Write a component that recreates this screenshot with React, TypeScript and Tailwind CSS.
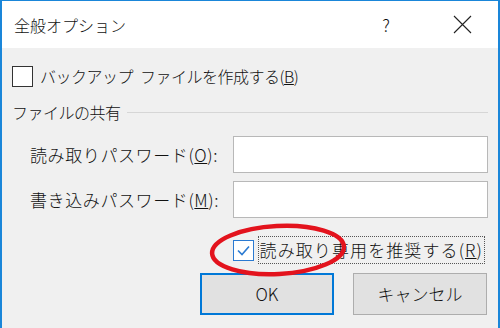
import React from 'react'

const font = { fontFamily: '"Noto Sans CJK JP", "Noto Sans", sans-serif' }

function CheckBox({ checked }: { checked?: boolean }) {
  return (
    <div
      className={`w-[21px] h-[21px] shrink-0 bg-white border-[1.5px] flex items-center justify-center ${
        checked ? 'border-[#2a7ad2]' : 'border-[#333333]'
      }`}
    >
      {checked && (
        <svg width="15" height="15" viewBox="0 0 15 15">
          <path d="M2 7.5 L6 11.5 L13 3.5" fill="none" stroke="#2a7ad2" strokeWidth="1.6" />
        </svg>
      )}
    </div>
  )
}

export default function App() {
  return (
    <div
      className="relative w-[500px] h-[328px] bg-[#f0f0f0] border-l-2 border-r-2 border-t border-[#1a86d9] overflow-hidden text-[#111] font-light"
      style={font}
    >
      {/* Title bar */}
      <div className="h-[47px] bg-white flex items-center pl-[12px]">
        <span className="text-[16px]">全般オプション</span>
        <span className="ml-auto mr-[30px] text-[17px] w-[20px] text-center">?</span>
        <div className="w-[72px] flex justify-center">
          <svg width="19" height="19" viewBox="0 0 19 19">
            <path d="M1 1 L18 18 M18 1 L1 18" stroke="#222" strokeWidth="1.1" />
          </svg>
        </div>
      </div>

      {/* Body */}
      <div className="pl-[10px] pr-[10px]">
        <div className="flex items-center gap-[7px] mt-[17px] h-[22px]">
          <CheckBox />
          <span className="text-[16px] tracking-[-0.5px]">
            <span className="mr-[7px]">バックアップ</span>ファイルを作成する(<span className="underline">B</span>)
          </span>
        </div>

        <div className="flex items-center mt-[14px] h-[22px]">
          <span className="text-[16px] tracking-[-0.5px]">ファイルの共有</span>
          <div className="flex-1 ml-[6px] h-px bg-[#d6d6d6]" />
        </div>

        <div className="pl-[18px] mt-[13px] flex flex-col gap-[8px]">
          <div className="flex items-center">
            <span className="text-[17px] tracking-[0.6px] flex-1">
              読み取りパスワード(<span className="underline">O</span>):
            </span>
            <div className="w-[255px] h-[37px] bg-white border border-[#b8b8b8]" />
          </div>
          <div className="flex items-center">
            <span className="text-[17px] tracking-[0.6px] flex-1">
              書き込みパスワード(<span className="underline">M</span>):
            </span>
            <div className="w-[255px] h-[37px] bg-white border border-[#b8b8b8]" />
          </div>
        </div>

        <div className="flex items-center justify-end mt-[18px] h-[28px] pr-[3px]">
          <CheckBox checked />
          <span className="ml-[4px] text-[17px] tracking-[1.1px] border border-dotted border-[#555] px-[1px] leading-[26px]">
            読み取り専用を推奨する(<span className="underline">R</span>)
          </span>
        </div>

        <div className="flex justify-end gap-[19px] mt-[9px] pr-[1px]">
          <button className="w-[134px] h-[42px] bg-[#e1e1e1] border-2 border-[#0078d7] text-[17px]">
            OK
          </button>
          <button className="w-[134px] h-[42px] bg-[#e1e1e1] border border-[#adadad] text-[17px]">
            キャンセル
          </button>
        </div>
      </div>

      {/* Red annotation ellipse */}
      <svg className="absolute left-[204px] top-[218px] pointer-events-none" width="150" height="62" viewBox="0 0 150 62">
        <ellipse
          cx="72"
          cy="31"
          rx="66"
          ry="24"
          fill="none"
          stroke="#e3131d"
          strokeWidth="4.5"
          transform="rotate(-3 72 31)"
        />
      </svg>
    </div>
  )
}
